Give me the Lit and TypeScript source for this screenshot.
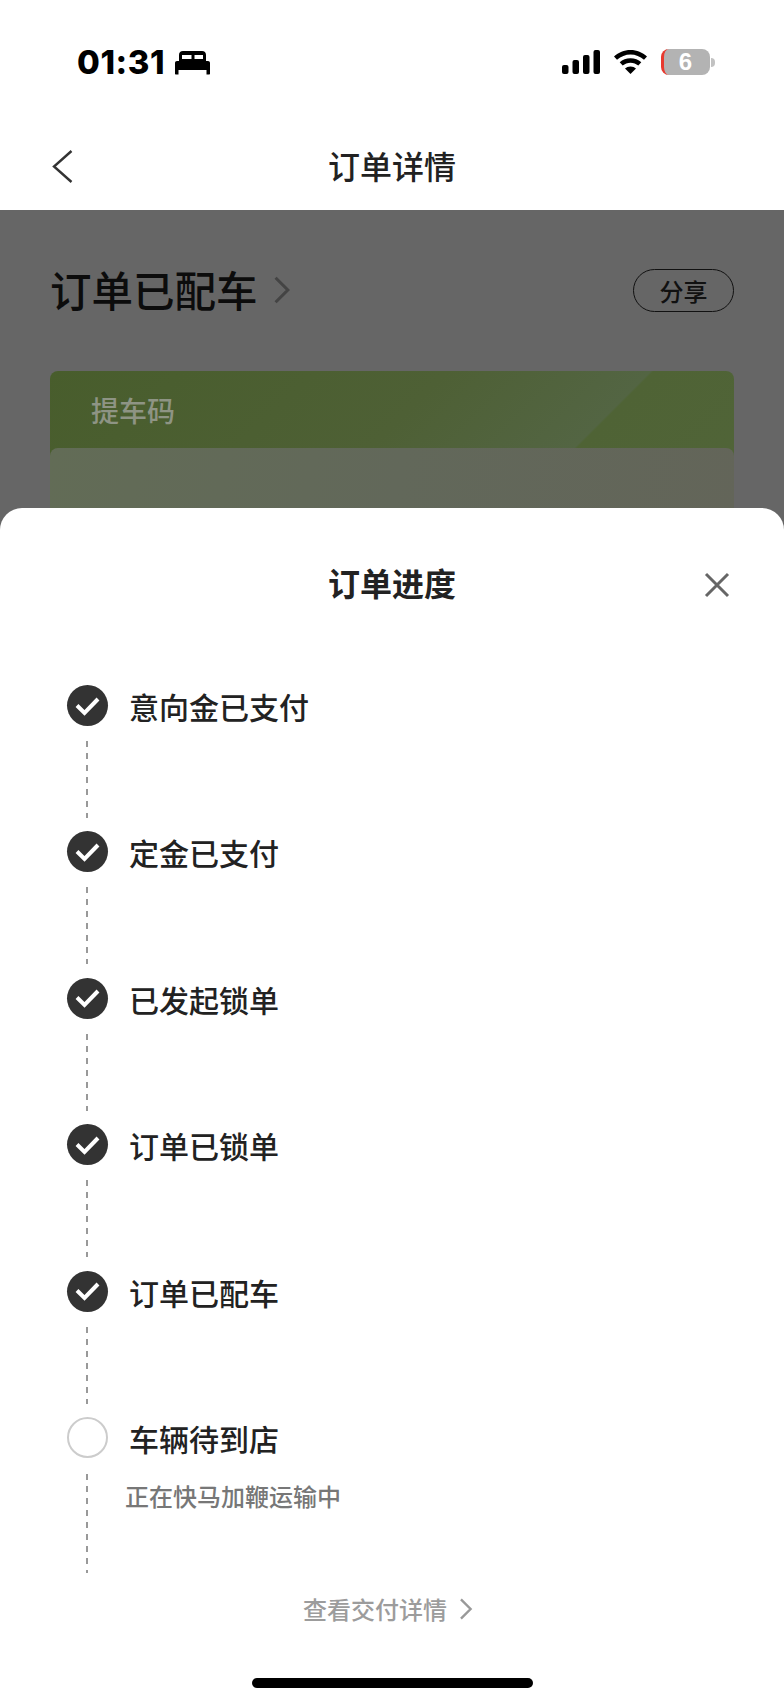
import { LitElement, html, css, svg } from 'lit'
import { customElement } from 'lit/decorators.js'

const steps = ['意向金已支付', '定金已支付', '已发起锁单', '订单已锁单', '订单已配车']

const chevron = (cls: string) => html`
  <svg class=${cls} viewBox="0 0 14 24" fill="none" stroke="currentColor" stroke-width="2.6">
    ${svg`<path d="M1.5 1.5 12 12 1.5 22.5" />`}
  </svg>
`

@customElement('app-root')
export class AppRoot extends LitElement {
  static styles = css`
    :host {
      display: block;
      position: relative;
      width: 784px;
      height: 1704px;
      overflow: hidden;
      background: #fff;
      font-family: 'Noto Sans CJK SC', 'Liberation Sans', sans-serif;
      color: #222;
    }

    .status {
      height: 124px;
      box-sizing: border-box;
      padding: 43px 69px 0 77px;
      display: flex;
      justify-content: space-between;
      align-items: flex-start;
    }
    .status-left {
      display: flex;
      align-items: center;
      height: 38px;
      gap: 10px;
    }
    .time {
      font-family: Inter, 'Liberation Sans', sans-serif;
      font-size: 33px;
      font-weight: 800;
      line-height: 38px;
      color: #000;
      letter-spacing: 0.6px;
    }
    .bed {
      width: 35px;
      height: 24px;
      margin-top: 2px;
    }
    .status-right {
      display: flex;
      align-items: center;
      height: 38px;
    }
    .signal {
      width: 38px;
      height: 24px;
      margin-right: 14px;
    }
    .wifi {
      width: 33px;
      height: 24px;
      margin-right: 14px;
    }
    .battery {
      width: 49px;
      height: 26px;
      border-radius: 8px;
      overflow: hidden;
      background: #b3b3b3;
      border-left: 3px solid #e8392e;
      box-sizing: border-box;
      display: flex;
      align-items: center;
      justify-content: center;
      color: #fff;
      font-family: 'Liberation Sans', sans-serif;
      font-size: 24px;
      font-weight: 700;
      line-height: 26px;
      padding-right: 3px;
    }
    .nub {
      width: 4px;
      height: 9px;
      margin-left: 1px;
      border-radius: 0 4px 4px 0;
      background: #c2c2c2;
    }

    .nav {
      height: 86px;
      position: relative;
      display: flex;
      align-items: center;
      justify-content: center;
      font-size: 32px;
      font-weight: 500;
      line-height: 40px;
      color: #222;
      padding-bottom: 4px;
      box-sizing: border-box;
    }
    .back {
      position: absolute;
      left: 52px;
      top: 26px;
      width: 21px;
      height: 33px;
      color: #333;
    }

    .backdrop {
      height: 400px;
      background: #666;
      box-sizing: border-box;
      padding: 58px 50px 0;
      overflow: hidden;
    }
    .order-head {
      display: flex;
      align-items: center;
      height: 44px;
    }
    .order-title {
      font-size: 41.5px;
      font-weight: 500;
      line-height: 44px;
      color: #0c0c0c;
      margin-top: -2px;
    }
    .order-chevron {
      width: 18px;
      height: 28px;
      margin-left: 15px;
      color: #444;
    }
    .share {
      margin-left: auto;
      width: 101px;
      height: 43px;
      box-sizing: border-box;
      border: 1.7px solid #111;
      border-radius: 22px;
      display: flex;
      align-items: center;
      justify-content: center;
      font-size: 24px;
      font-weight: 500;
      color: #111;
    }
    .card {
      margin-top: 59px;
      height: 200px;
      border-radius: 8px;
      background: linear-gradient(135deg, #485d2c 0%, #4e6035 45%, #536543 68%, #4f6335 68.3%, #51653a 100%);
      overflow: hidden;
    }
    .card-label {
      height: 77px;
      box-sizing: border-box;
      padding: 19px 0 0 41px;
      font-size: 28px;
      font-weight: 500;
      line-height: 40px;
      color: #8e9484;
    }
    .card-panel {
      height: 123px;
      border-radius: 8px 8px 0 0;
      background: linear-gradient(100deg, #626c56, #62685a 50%, #636559);
    }

    .sheet {
      position: absolute;
      left: 0;
      right: 0;
      top: 508px;
      bottom: 0;
      background: #fff;
      border-radius: 22px 22px 0 0;
      display: flex;
      flex-direction: column;
    }
    .sheet-head {
      height: 177px;
      box-sizing: border-box;
      padding: 53px 50px 0;
      display: flex;
      justify-content: center;
      position: relative;
    }
    .sheet-title {
      font-size: 32px;
      font-weight: 700;
      line-height: 42px;
      color: #222;
    }
    .close {
      position: absolute;
      left: 704px;
      top: 64px;
      width: 26px;
      height: 26px;
      color: #666;
    }

    .steps {
      padding-left: 67px;
    }
    .step {
      display: grid;
      grid-template-columns: 41px 1fr;
      column-gap: 21px;
      height: 146.4px;
    }
    .rail {
      display: flex;
      flex-direction: column;
      align-items: center;
    }
    .dot {
      width: 41px;
      height: 41px;
      flex: none;
      border-radius: 50%;
      background: #333;
      display: flex;
      align-items: center;
      justify-content: center;
    }
    .dot svg {
      width: 25px;
      height: 20px;
    }
    .dot.pending {
      box-sizing: border-box;
      background: #fff;
      border: 2px solid #ccc;
    }
    .dash {
      width: 2px;
      height: 77px;
      margin: 15px 2px 0 0;
      background: repeating-linear-gradient(#999 0 6px, transparent 6px 12px);
    }
    .step.last .dash {
      height: 99px;
      margin-top: 16px;
    }
    .label {
      font-size: 30px;
      font-weight: 500;
      line-height: 40px;
      margin-top: 1px;
      color: #222;
    }
    .sub {
      font-size: 24px;
      font-weight: 500;
      line-height: 32px;
      color: #777;
      margin: 22px 0 0 -4px;
    }

    .detail {
      position: absolute;
      left: 303px;
      top: 1085px;
      display: flex;
      align-items: center;
      font-size: 24px;
      font-weight: 500;
      line-height: 32px;
      color: #9c9c9c;
    }
    .detail-chevron {
      width: 14px;
      height: 22px;
      margin-left: 12px;
      color: #999;
    }
    .home {
      position: absolute;
      left: 252px;
      top: 1170px;
      width: 281px;
      height: 10px;
      border-radius: 5px;
      background: #000;
    }
  `

  render() {
    return html`
      <div class="status">
        <div class="status-left">
          <span class="time">01:31</span>
          <svg class="bed" viewBox="0 0 35 24" fill="#000">
            <path
              fill-rule="evenodd"
              d="M4 10V4C4 1.500 5.500 0 8 0h19c2.500 0 4 1.500 4 4v6ZM7 4v4h9.500V4ZM19.500 4v4H28V4Z"
            />
            <path d="M2 10h31c1.200 0 2 .8 2 2v7H0v-7c0-1.200.8-2 2-2ZM0 19h3.500v4.500H1c-.6 0-1-.4-1-1ZM31.500 19H35v3.500c0 .6-.4 1-1 1h-2.500Z" />
          </svg>
        </div>
        <div class="status-right">
          <svg class="signal" viewBox="0 0 38 24" fill="#000">
            <rect x="0" y="15" width="6.500" height="9" rx="2" />
            <rect x="10.500" y="10" width="6.500" height="14" rx="2" />
            <rect x="21" y="5" width="6.500" height="19" rx="2" />
            <rect x="31.500" y="0" width="6.500" height="24" rx="2" />
          </svg>
          <svg class="wifi" viewBox="0 0 33 24" fill="#000">
            <path d="M16.500 0C10 0 4.600 2.400 0 6.500l3 3.300C7 6.300 11.500 4.400 16.500 4.400s9.500 1.900 13.500 5.400l3-3.300C28.400 2.400 23 0 16.500 0Z" />
            <path d="M16.500 8.300c-4.300 0-7.900 1.500-10.800 4l3 3.300c2.200-1.800 4.800-2.900 7.800-2.900s5.600 1.100 7.800 2.900l3-3.300c-2.900-2.500-6.500-4-10.800-4Z" />
            <path d="M16.500 16.500c-2.300 0-4 .7-5.500 2l5.500 5.500 5.500-5.500c-1.500-1.300-3.200-2-5.500-2Z" />
          </svg>
          <div class="battery">6</div>
          <div class="nub"></div>
        </div>
      </div>

      <div class="nav">
        <svg class="back" viewBox="0 0 21 33" fill="none" stroke="currentColor" stroke-width="2.400">
          <path d="M19.500 1 2 16.500 19.500 32" />
        </svg>
        订单详情
      </div>

      <div class="backdrop">
        <div class="order-head">
          <span class="order-title">订单已配车</span>
          ${chevron('order-chevron')}
          <span class="share">分享</span>
        </div>
        <div class="card">
          <div class="card-label">提车码</div>
          <div class="card-panel"></div>
        </div>
      </div>

      <div class="sheet">
        <div class="sheet-head">
          <span class="sheet-title">订单进度</span>
          <svg class="close" viewBox="0 0 26 26" fill="none" stroke="currentColor" stroke-width="3">
            <path d="M2 2 24 24M24 2 2 24" />
          </svg>
        </div>
        <div class="steps">
          ${steps.map(
            (label) => html`
              <div class="step">
                <div class="rail">
                  <div class="dot">
                    <svg viewBox="0 0 25 20" fill="none" stroke="#fff" stroke-width="4">
                      <path d="M2 9.500 9.500 17 23 3" />
                    </svg>
                  </div>
                  <div class="dash"></div>
                </div>
                <div class="label">${label}</div>
              </div>
            `
          )}
          <div class="step last">
            <div class="rail">
              <div class="dot pending"></div>
              <div class="dash"></div>
            </div>
            <div>
              <div class="label">车辆待到店</div>
              <div class="sub">正在快马加鞭运输中</div>
            </div>
          </div>
        </div>
        <div class="detail">查看交付详情 ${chevron('detail-chevron')}</div>
        <div class="home"></div>
      </div>
    `
  }
}
